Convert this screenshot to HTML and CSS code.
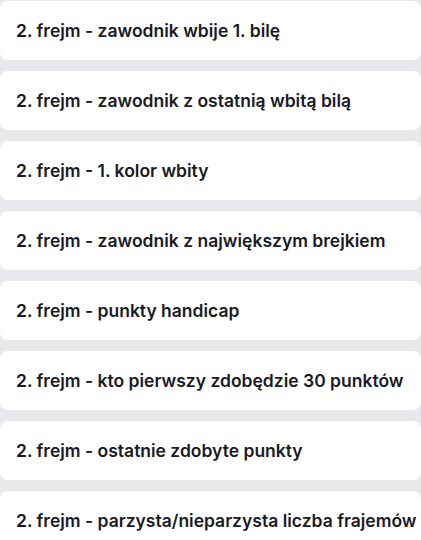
FILE: index.html
```html
<!DOCTYPE html>
<html lang="pl">
<head>
<meta charset="utf-8">
<link rel="stylesheet" href="styles.css">
</head>
<body>
<div class="list">
  <div class="card">2. frejm - zawodnik wbije 1. bilę</div>
  <div class="card">2. frejm - zawodnik z ostatnią wbitą bilą</div>
  <div class="card">2. frejm - 1. kolor wbity</div>
  <div class="card">2. frejm - zawodnik z największym brejkiem</div>
  <div class="card">2. frejm - punkty handicap</div>
  <div class="card">2. frejm - kto pierwszy zdobędzie 30 punktów</div>
  <div class="card">2. frejm - ostatnie zdobyte punkty</div>
  <div class="card">2. frejm - parzysta/nieparzysta liczba frajemów</div>
</div>
</body>
</html>
```
FILE: styles.css
```css
html, body {
  margin: 0;
  padding: 0;
  background: #e9e9eb;
}
.list {
  display: flex;
  flex-direction: column;
  gap: 11px;
  padding-top: 1px;
}
.card {
  height: 59px;
  background: #ffffff;
  border-radius: 8px;
  display: flex;
  align-items: center;
  padding: 0 16px;
  font-family: Inter, "Noto Sans", sans-serif;
  font-weight: 600;
  font-size: 17.5px;
  color: #1a1a24;
  white-space: nowrap;
}
```
